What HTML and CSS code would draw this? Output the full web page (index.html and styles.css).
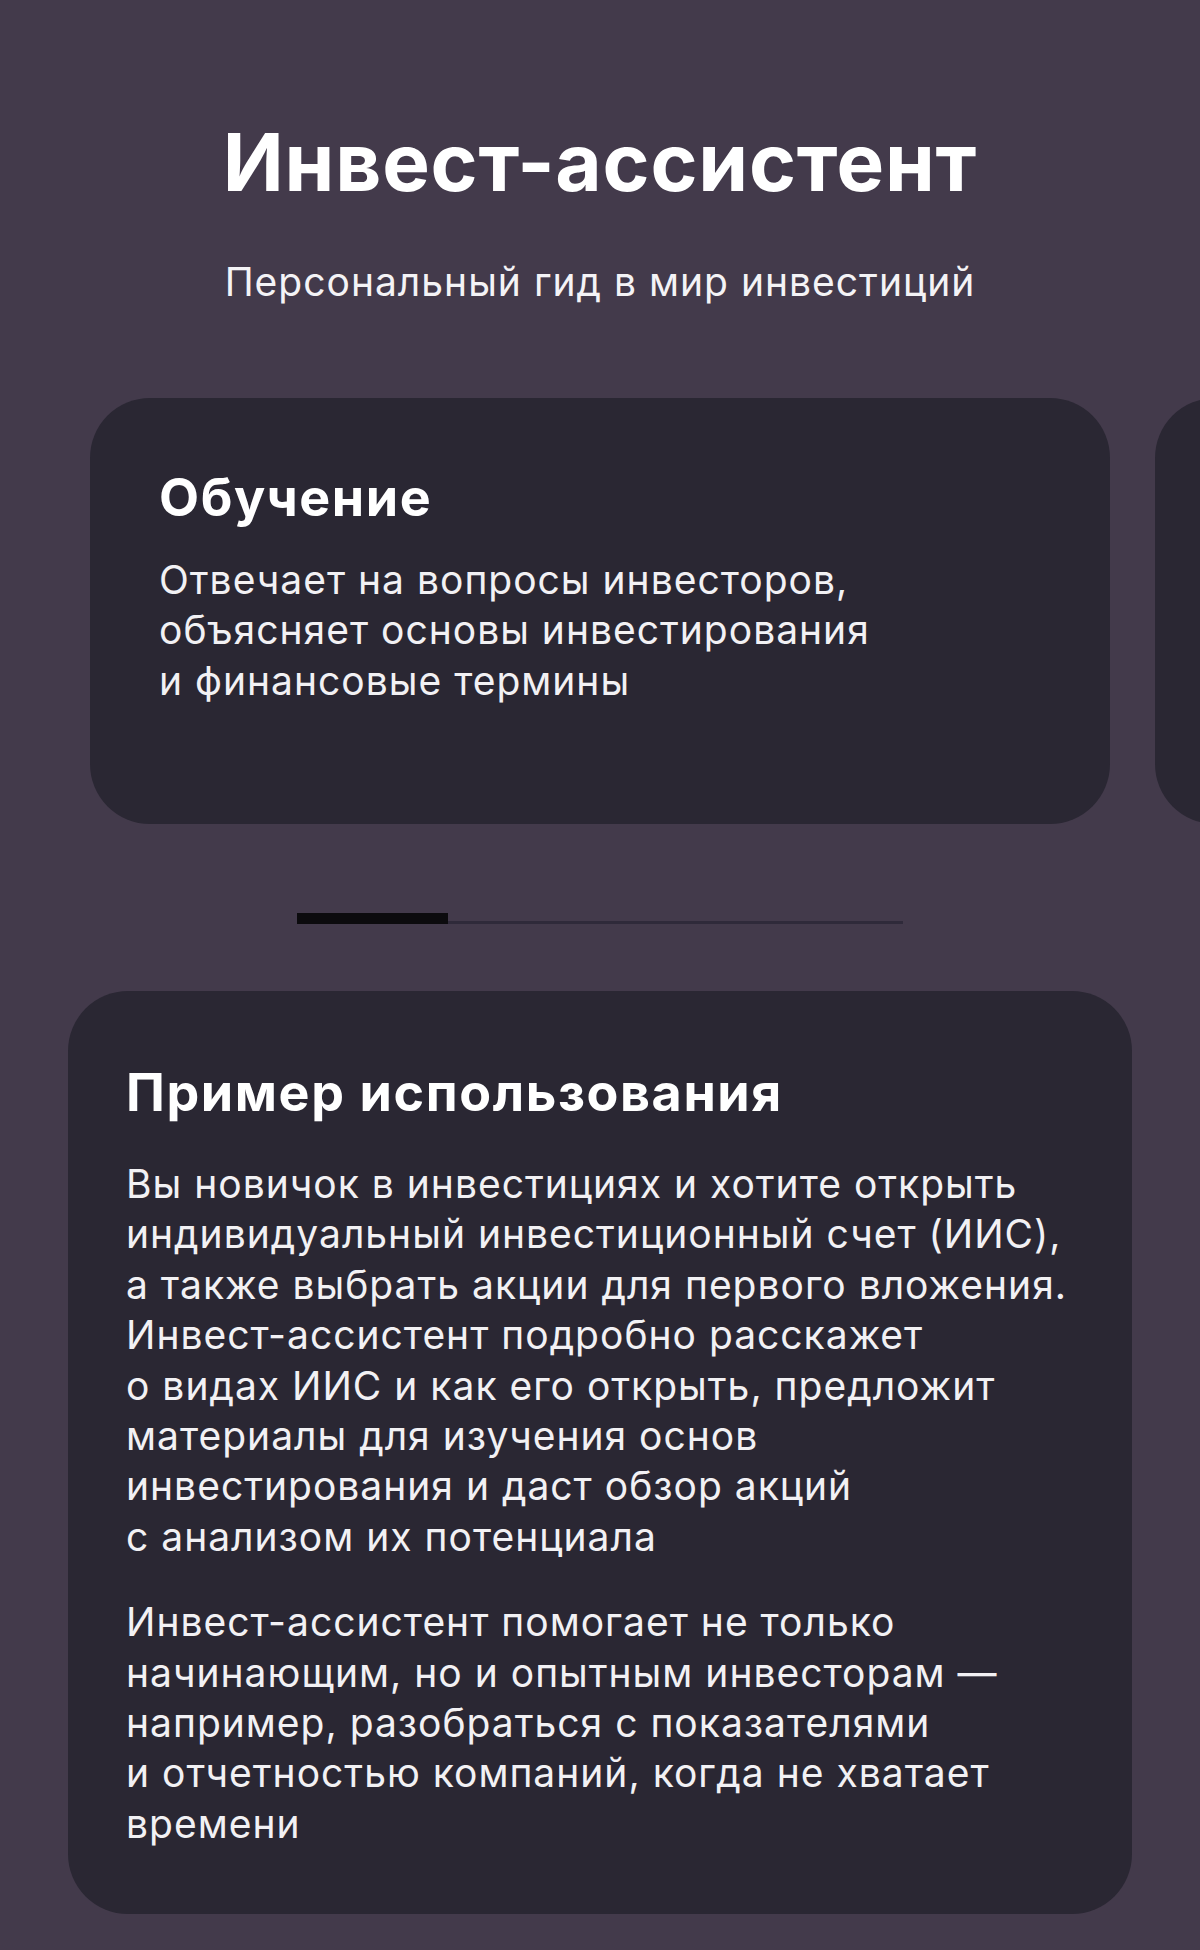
FILE: index.html
```html
<!DOCTYPE html>
<html lang="ru">
<head>
<meta charset="utf-8">
<title>Инвест-ассистент</title>
<link rel="stylesheet" href="styles.css">
</head>
<body>
<main class="page">
  <header class="hero">
    <h1 class="hero-title">Инвест-ассистент</h1>
    <p class="hero-sub">Персональный гид в мир инвестиций</p>
  </header>

  <section class="carousel">
    <div class="carousel-track">
      <article class="feature-card">
        <h2 class="card-title">Обучение</h2>
        <p class="card-text">Отвечает на вопросы инвесторов,<br>объясняет основы инвестирования<br>и финансовые термины</p>
      </article>
      <article class="feature-card"></article>
    </div>
    <div class="scrollbar">
      <div class="scrollbar-thumb"></div>
    </div>
  </section>

  <section class="example-card">
    <h2 class="card-title">Пример использования</h2>
    <p class="card-text">Вы новичок в инвестициях и хотите открыть<br>индивидуальный инвестиционный счет (ИИС),<br>а также выбрать акции для первого вложения.<br>Инвест-ассистент подробно расскажет<br>о видах ИИС и как его открыть, предложит<br>материалы для изучения основ<br>инвестирования и даст обзор акций<br>с анализом их потенциала</p>
    <p class="card-text">Инвест-ассистент помогает не только<br>начинающим, но и опытным инвесторам —<br>например, разобраться с показателями<br>и отчетностью компаний, когда не хватает<br>времени</p>
  </section>
</main>
</body>
</html>
```

FILE: styles.css
```css
* {
  box-sizing: border-box;
}

html,
body {
  margin: 0;
  padding: 0;
}

body {
  background: #433a4b;
  color: #ffffff;
  font-family: Inter, "Noto Sans", "DejaVu Sans", sans-serif;
  -webkit-font-smoothing: antialiased;
}

.page {
  width: 1200px;
  min-height: 1950px;
  overflow: hidden;
  padding-top: 122px;
}

/* heading block */
.hero {
  display: flex;
  flex-direction: column;
  align-items: center;
}

.hero-title {
  margin: 0;
  font-size: 80px;
  line-height: 80px;
  font-weight: 700;
  letter-spacing: 0.8px;
}

.hero-sub {
  margin: 60px 0 0;
  font-size: 39px;
  line-height: 40px;
  font-weight: 400;
  letter-spacing: 1px;
  color: #f4f3f6;
}

/* horizontal feature carousel */
.carousel {
  margin-top: 96px;
}

.carousel-track {
  display: flex;
  gap: 45px;
  padding-left: 90px;
}

.feature-card {
  flex: 0 0 1020px;
  height: 426px;
  background: #2a2733;
  border-radius: 60px;
  padding: 72px 69px 0;
}

.scrollbar {
  width: 606px;
  height: 11px;
  margin: 89px auto 0;
  display: flex;
  align-items: flex-end;
  background: linear-gradient(#2f2a3a, #2f2a3a) bottom / 100% 3px no-repeat;
}

.scrollbar-thumb {
  width: 151px;
  height: 11px;
  background: #0c0b0e;
}

/* card text */
.card-title {
  margin: 0;
  font-size: 52px;
  line-height: 56px;
  font-weight: 700;
  letter-spacing: 1.6px;
}

.card-text {
  margin: 29px 0 0;
  font-size: 39px;
  line-height: 50.4px;
  font-weight: 400;
  letter-spacing: 1px;
  color: #f2f1f4;
  white-space: nowrap;
}

/* usage example */
.example-card {
  width: 1064px;
  margin: 67px auto 0;
  background: #2a2733;
  border-radius: 60px;
  padding: 74px 58px 65px;
}

.example-card .card-text {
  margin-top: 38px;
}

.example-card .card-text + .card-text {
  margin-top: 35px;
}
```
